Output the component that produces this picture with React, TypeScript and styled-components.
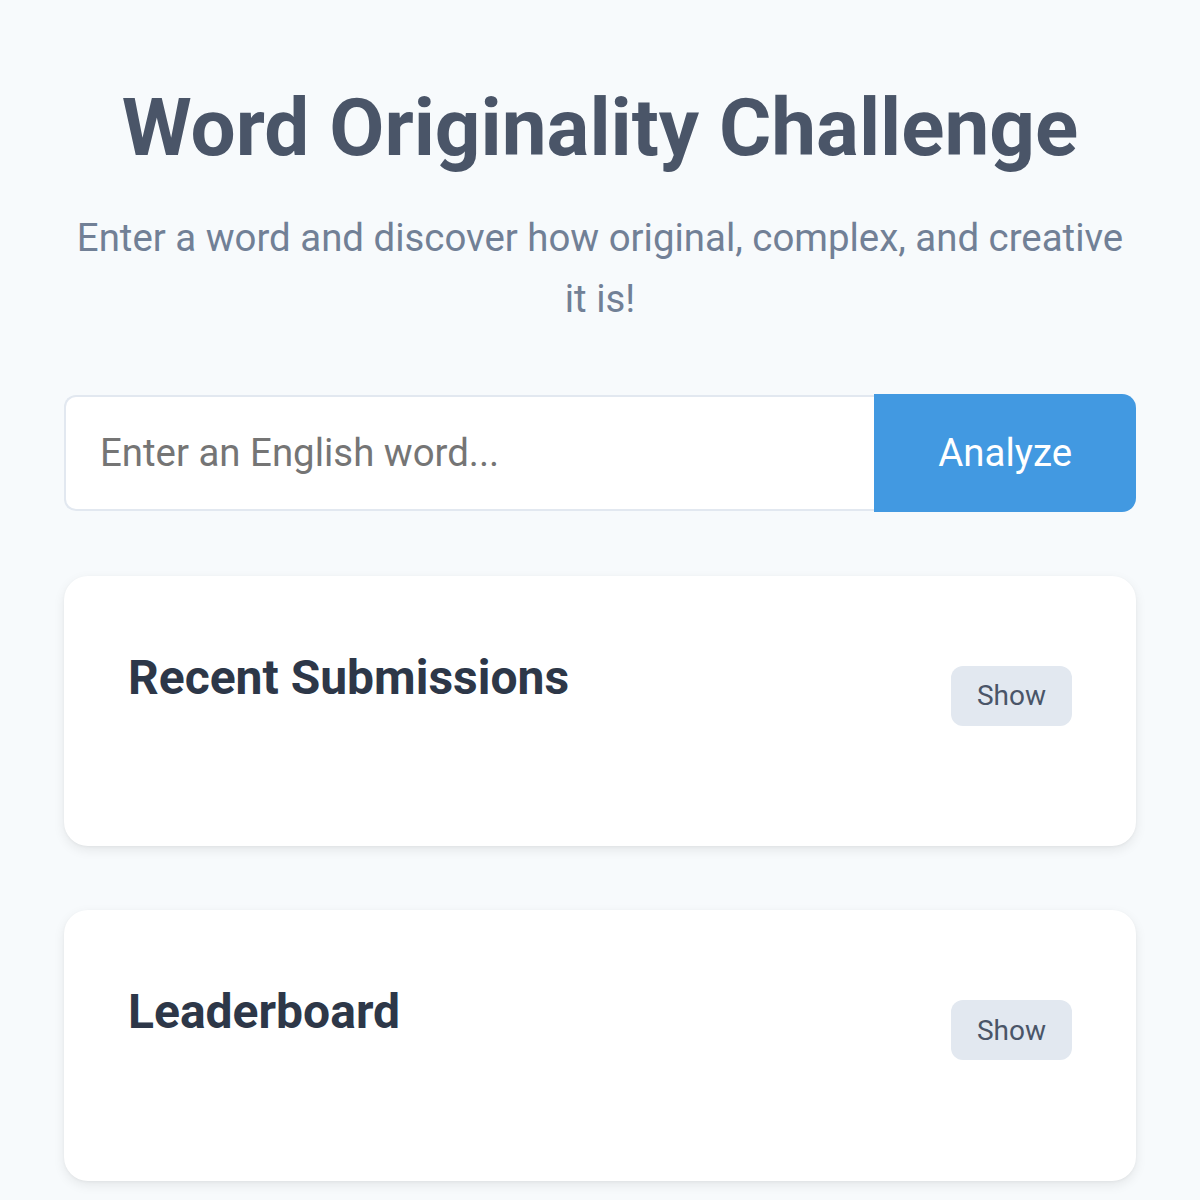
import React, { useState } from "react";
import styled, { createGlobalStyle } from "styled-components";

const GlobalStyle = createGlobalStyle`
  html, body {
    margin: 0;
    padding: 0;
    background: #f7fafc;
    font-family: Roboto, "Liberation Sans", sans-serif;
  }
  * {
    box-sizing: border-box;
  }
`;

const Page = styled.div`
  width: 1200px;
  min-height: 1200px;
  padding: 80px 64px 64px;
  background: #f7fafc;
`;

const Title = styled.h1`
  margin: 0;
  text-align: center;
  font-size: 80px;
  line-height: 1.2;
  font-weight: 700;
  color: #4a5568;
`;

const Subtitle = styled.p`
  margin: 31px 0 0;
  text-align: center;
  font-size: 38.4px;
  line-height: 1.6;
  color: #718096;
`;

const SearchRow = styled.form`
  display: flex;
  align-items: stretch;
  height: 118px;
  margin-top: 64px;
`;

const WordInput = styled.input`
  flex: 1;
  min-width: 0;
  margin: 1px 0;
  padding: 0 34px;
  border: 2px solid #e2e8f0;
  border-right: none;
  border-radius: 12px 0 0 12px;
  background: #ffffff;
  font-family: inherit;
  font-size: 38.4px;
  color: #2d3748;
  outline: none;

  &::placeholder {
    color: #757575;
  }
`;

const AnalyzeButton = styled.button`
  padding: 0 64px;
  border: none;
  border-radius: 0 14px 14px 0;
  background: #4299e1;
  color: #ffffff;
  font-family: inherit;
  font-size: 38.4px;
  cursor: pointer;
`;

const Card = styled.section`
  margin-top: 64px;
  padding: 64px 64px 95px;
  background: #ffffff;
  border-radius: 24px;
  box-shadow: 0 4px 12px rgba(0, 0, 0, 0.08), 0 1px 3px rgba(0, 0, 0, 0.04);
`;

const CardHeader = styled.div`
  display: flex;
  justify-content: space-between;
  align-items: center;
`;

const CardTitle = styled.h2`
  margin: 9px 0 45px;
  font-size: 48px;
  line-height: 1.2;
  font-weight: 700;
  color: #2d3748;
`;

const ToggleButton = styled.button`
  height: 60px;
  padding: 0 26px;
  border: none;
  border-radius: 12px;
  background: #e2e8f0;
  color: #4a5568;
  font-family: inherit;
  font-size: 28px;
  cursor: pointer;
`;

function Panel({ title }: { title: string }) {
  const [open, setOpen] = useState(false);
  return (
    <Card>
      <CardHeader>
        <CardTitle>{title}</CardTitle>
        <ToggleButton type="button" onClick={() => setOpen(!open)}>
          {open ? "Hide" : "Show"}
        </ToggleButton>
      </CardHeader>
    </Card>
  );
}

export default function App() {
  const [word, setWord] = useState("");

  return (
    <>
      <GlobalStyle />
      <Page>
        <Title>Word Originality Challenge</Title>
        <Subtitle>Enter a word and discover how original, complex, and creative it is!</Subtitle>
        <SearchRow onSubmit={e => e.preventDefault()}>
          <WordInput
            value={word}
            onChange={e => setWord(e.target.value)}
            placeholder="Enter an English word..."
          />
          <AnalyzeButton type="submit">Analyze</AnalyzeButton>
        </SearchRow>
        <Panel title="Recent Submissions" />
        <Panel title="Leaderboard" />
      </Page>
    </>
  );
}
